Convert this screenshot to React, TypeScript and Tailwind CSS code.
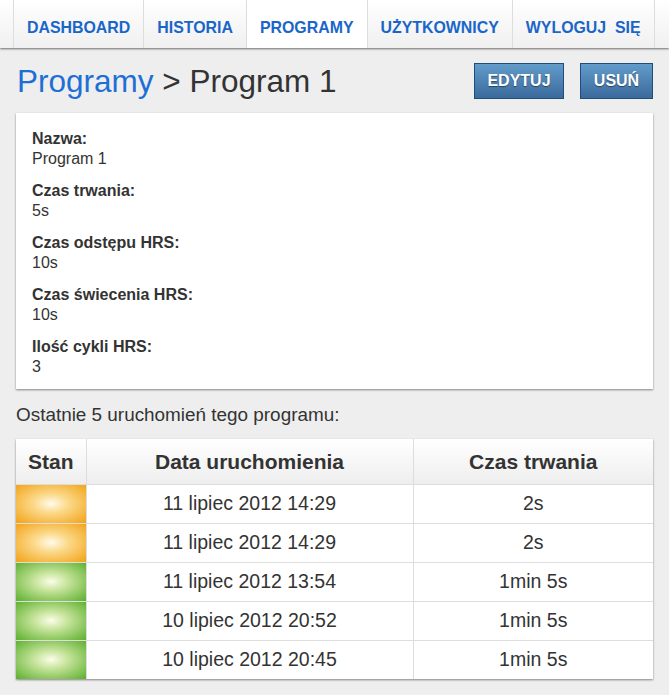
import React from "react";

const navItems = [
  { label: "DASHBOARD", active: false },
  { label: "HISTORIA", active: false },
  { label: "PROGRAMY", active: true },
  { label: "UŻYTKOWNICY", active: false },
  { label: "WYLOGUJ\u00a0 SIĘ", active: false },
];

const fields = [
  ["Nazwa:", "Program 1"],
  ["Czas trwania:", "5s"],
  ["Czas odstępu HRS:", "10s"],
  ["Czas świecenia HRS:", "10s"],
  ["Ilość cykli HRS:", "3"],
];

const runs = [
  { ok: false, date: "11 lipiec 2012 14:29", dur: "2s" },
  { ok: false, date: "11 lipiec 2012 14:29", dur: "2s" },
  { ok: true, date: "11 lipiec 2012 13:54", dur: "1min 5s" },
  { ok: true, date: "10 lipiec 2012 20:52", dur: "1min 5s" },
  { ok: true, date: "10 lipiec 2012 20:45", dur: "1min 5s" },
];

export default function App() {
  return (
    <div
      className="min-h-[695px] w-[669px] bg-[#eeeeee] text-[#333333]"
      style={{ fontFamily: '"Liberation Sans", Arial, sans-serif' }}
    >
      <nav className="flex h-[48px] bg-gradient-to-b from-white to-[#f0f0f0] pl-[13px] shadow-[0_1px_2px_rgba(0,0,0,0.55)]">
        <div className="flex border-r border-[#dddddd]">
          {navItems.map((n) => (
            <div
              key={n.label}
              className={`flex items-center border-l border-[#dddddd] px-[13px] pt-[7px] text-[15.9px] font-bold text-[#1a66c8] ${
                n.active ? "bg-white" : ""
              }`}
            >
              {n.label}
            </div>
          ))}
        </div>
      </nav>

      <div className="mt-[15px] flex items-center justify-between px-[16px]">
        <h1 className="ml-[1px] text-[31.5px] leading-[36px]">
          <span className="text-[#1d6fd6]">Programy</span>
          <span className="text-[#333333]"> &gt; Program 1</span>
        </h1>
        <div className="flex gap-[16px]">
          <button className="h-[36px] w-[90px] border border-[#1e4d77] bg-gradient-to-b from-[#629ccb] to-[#3b6a9c] text-[16px] font-bold text-white [text-shadow:0_1px_1px_rgba(0,0,0,0.45)]">
            EDYTUJ
          </button>
          <button className="h-[36px] w-[73px] border border-[#1e4d77] bg-gradient-to-b from-[#629ccb] to-[#3b6a9c] text-[16px] font-bold text-white [text-shadow:0_1px_1px_rgba(0,0,0,0.45)]">
            USUŃ
          </button>
        </div>
      </div>

      <div className="mx-[16px] mt-[14px] bg-white px-[16px] pb-[12px] pt-[16px] shadow-[0_1px_2px_rgba(0,0,0,0.45)]">
        {fields.map(([k, v], i) => (
          <div key={k} className={i > 0 ? "mt-[12px]" : ""}>
            <div className="text-[16px] font-bold leading-[20px]">{k}</div>
            <div className="text-[16px] leading-[20px]">{v}</div>
          </div>
        ))}
      </div>

      <div className="ml-[16px] mt-[15px] text-[18.9px] leading-[22px]">
        Ostatnie 5 uruchomień tego programu:
      </div>

      <div className="mx-[16px] mt-[13px] bg-white shadow-[0_1px_2px_rgba(0,0,0,0.45)]">
        <table className="w-full border-collapse">
          <thead>
            <tr className="h-[45px] bg-gradient-to-b from-white to-[#eeeeee]">
              <th className="w-[70px] border-b border-r border-[#dddddd] text-[21px] font-bold">Stan</th>
              <th className="w-[327px] border-b border-r border-[#dddddd] text-[21px] font-bold">Data uruchomienia</th>
              <th className="border-b border-[#dddddd] text-[21px] font-bold">Czas trwania</th>
            </tr>
          </thead>
          <tbody>
            {runs.map((r, i) => (
              <tr key={i} className="h-[39px]">
                <td
                  className={`border-r border-[#dddddd] p-0 ${i < runs.length - 1 ? "border-b" : ""} ${
                    r.ok
                      ? "bg-[radial-gradient(ellipse_at_center,#fbfde8_0%,#c5e39a_35%,#5daf2f_100%)]"
                      : "bg-[radial-gradient(ellipse_at_center,#fffbea_0%,#fbd98a_35%,#f2a217_100%)]"
                  }`}
                ></td>
                <td className={`border-r border-[#dddddd] text-center text-[19.5px] ${i < runs.length - 1 ? "border-b" : ""}`}>
                  {r.date}
                </td>
                <td className={`border-[#dddddd] text-center text-[19.5px] ${i < runs.length - 1 ? "border-b" : ""}`}>
                  {r.dur}
                </td>
              </tr>
            ))}
          </tbody>
        </table>
      </div>
    </div>
  );
}
